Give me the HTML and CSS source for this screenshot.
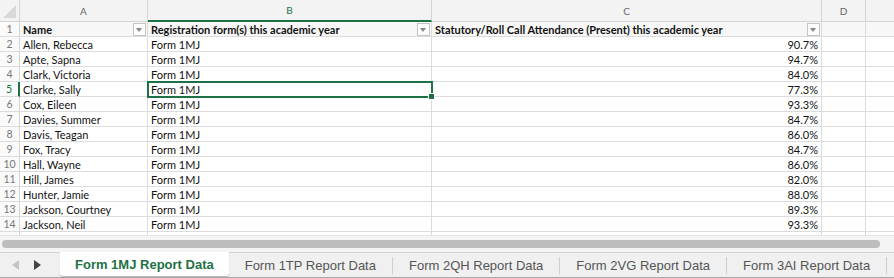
FILE: index.html
```html
<!DOCTYPE html>
<html lang="en">
<head>
    <meta charset="UTF-8">
    <title>Form 1MJ Report Data</title>
    <link rel="stylesheet" href="styles.css">
</head>
<body>

<div class="sheet">
    <div class="grid">
        <div class="row col-heads">
            <div class="corner"><span class="corner-tri"></span></div>
            <div class="col-head">A</div>
            <div class="col-head active">B</div>
            <div class="col-head">C</div>
            <div class="col-head">D</div>
            <div class="col-head last"></div>
        </div>

        <div class="row head-row">
            <div class="num">1</div>
            <div class="cell bold">Name<span class="drop"></span></div>
            <div class="cell bold">Registration form(s) this academic year<span class="drop"></span></div>
            <div class="cell bold">Statutory/Roll Call Attendance (Present) this academic year<span class="drop"></span></div>
            <div class="cell"></div>
            <div class="cell last"></div>
        </div>
    </div>

    <div class="hscroll"><div class="thumb"></div></div>

    <div class="tabs">
        <div class="tab-nav">
            <span class="arrow left"></span>
            <span class="arrow right"></span>
        </div>
        <div class="tab current">Form 1MJ Report Data</div>
        <div class="tab">Form 1TP Report Data</div>
        <div class="tab">Form 2QH Report Data</div>
        <div class="tab">Form 2VG Report Data</div>
        <div class="tab">Form 3AI Report Data</div>
    </div>
</div>

<script>
    const pupils = [
        ['Allen, Rebecca', '90.7%'],
        ['Apte, Sapna', '94.7%'],
        ['Clark, Victoria', '84.0%'],
        ['Clarke, Sally', '77.3%'],
        ['Cox, Eileen', '93.3%'],
        ['Davies, Summer', '84.7%'],
        ['Davis, Teagan', '86.0%'],
        ['Fox, Tracy', '84.7%'],
        ['Hall, Wayne', '86.0%'],
        ['Hill, James', '82.0%'],
        ['Hunter, Jamie', '88.0%'],
        ['Jackson, Courtney', '89.3%'],
        ['Jackson, Neil', '93.3%'],
        ['Jones, Kiera', '85.3%']
    ];

    const grid = document.querySelector('.grid');

    pupils.forEach((p, i) => {
        const rowNum = i + 2;
        const row = document.createElement('div');
        row.className = 'row';
        const selected = rowNum === 5;
        row.innerHTML = `
            <div class="num${selected ? ' active' : ''}">${rowNum}</div>
            <div class="cell">${p[0]}</div>
            <div class="cell${selected ? ' selected' : ''}">Form 1MJ${selected ? '<span class="handle"></span>' : ''}</div>
            <div class="cell right">${p[1]}</div>
            <div class="cell"></div>
            <div class="cell last"></div>
        `;
        grid.appendChild(row);
    });
</script>

</body>
</html>
```

FILE: styles.css
```css
body {
    margin: 0;
    padding: 0;
    background-color: #fff;
    font-family: 'Lato', 'Open Sans', sans-serif;
}

.sheet {
    width: 894px;
    height: 278px;
    display: flex;
    flex-direction: column;
    overflow: hidden;
}

.grid {
    height: 235px;
    overflow: hidden;
}

.row {
    display: grid;
    grid-template-columns: 20px 128px 284px 390px 44px 1fr;
    height: 15px;
    font-size: 11px;
    color: #111;
}

.col-heads {
    height: 21px;
    background-color: #f3f3f3;
    border-bottom: 1px solid #d4d4d4;
}

.corner {
    position: relative;
    border-right: 1px solid #d4d4d4;
}

.corner-tri {
    position: absolute;
    right: 3px;
    bottom: 3px;
    width: 0;
    height: 0;
    border-left: 13px solid transparent;
    border-bottom: 13px solid #d8d8d8;
}

.col-head {
    display: flex;
    align-items: center;
    justify-content: center;
    color: #666;
    font-size: 10px;
    border-right: 1px solid #d4d4d4;
}

.col-head.active {
    color: #1e7145;
    border-bottom: 2px solid #1e7145;
    margin-bottom: -1px;
}

.col-head.last,
.cell.last {
    border-right: none;
}

.num {
    display: flex;
    align-items: center;
    justify-content: center;
    color: #777;
    font-size: 10.5px;
    background-color: #fafafa;
    border-right: 1px solid #d4d4d4;
    border-bottom: 1px solid #dcdcdc;
}

.num.active {
    color: #1e7145;
    border-right: 2px solid #1e7145;
}

.cell {
    position: relative;
    display: flex;
    align-items: center;
    padding: 0 3px;
    white-space: nowrap;
    overflow: visible;
    border-right: 1px solid #dcdcdc;
    border-bottom: 1px solid #dcdcdc;
}

.head-row .cell {
    background-color: #f7f7f7;
}

.bold {
    font-weight: bold;
}

.right {
    justify-content: flex-end;
}

.drop {
    position: absolute;
    right: 1px;
    top: 1px;
    width: 11px;
    height: 11px;
    border: 1px solid #c4c4c4;
    background-color: #fdfdfd;
}

.drop::after {
    content: '';
    position: absolute;
    left: 2px;
    top: 4px;
    border-left: 3.5px solid transparent;
    border-right: 3.5px solid transparent;
    border-top: 4px solid #888;
}

.selected {
    outline: 2px solid #1e7145;
    outline-offset: -1px;
    z-index: 2;
}

.handle {
    position: absolute;
    right: -4px;
    bottom: -4px;
    width: 5px;
    height: 5px;
    background-color: #1e7145;
    border: 1px solid #fff;
}

.hscroll {
    height: 16px;
    background-color: #f4f4f4;
    border-top: 1px solid #e4e4e4;
    display: flex;
    align-items: center;
    padding: 0 14px 0 2px;
}

.thumb {
    flex: 1;
    height: 8px;
    border-radius: 4px;
    background-color: #bdbdbd;
}

.tabs {
    flex: 1;
    display: flex;
    background-color: #f0f0f0;
    border-top: 1px solid #d2d2d2;
    border-bottom: 1px solid #a8a8a8;
    font-family: 'Liberation Sans', Arial, sans-serif;
    font-size: 13px;
    color: #555;
}

.tab-nav {
    width: 60px;
    display: flex;
    align-items: center;
    gap: 15px;
    padding-left: 12px;
    box-sizing: border-box;
}

.arrow {
    width: 0;
    height: 0;
    border-top: 5px solid transparent;
    border-bottom: 5px solid transparent;
}

.arrow.left {
    border-right: 7px solid #c4c4c4;
}

.arrow.right {
    border-left: 7px solid #444;
}

.tab {
    display: flex;
    align-items: center;
    padding: 0 16px;
    margin: 4px 0 3px;
    border-right: 1px solid #cfcfcf;
}

.tab.current {
    margin: -1px 0 1px;
    padding: 0 15px;
    background-color: #fff;
    color: #1e7145;
    font-weight: bold;
    border-right: none;
    border-radius: 0 0 3px 3px;
    box-shadow: 0 1px 1px rgba(0, 0, 0, 0.25);
}
```
